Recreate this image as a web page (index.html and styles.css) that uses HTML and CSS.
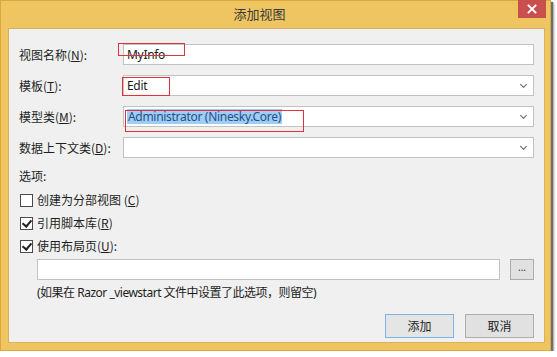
FILE: index.html
```html
<!DOCTYPE html>
<html lang="zh-CN">
<head>
<meta charset="utf-8">
<link rel="stylesheet" href="styles.css">
</head>
<body>
<div class="window">
  <div class="titlebar">
    <div class="title">添加视图</div>
    <div class="close">
      <svg width="10" height="10" viewBox="0 0 10 10"><path d="M1.5 1.5 L8.5 8.5 M8.5 1.5 L1.5 8.5" stroke="#fff" stroke-width="1.8" stroke-linecap="square"/></svg>
    </div>
  </div>
  <div class="panel">
    <div class="form">
      <label class="lbl">视图名称(<u>N</u>):</label>
      <div class="field"><span class="val">MyInfo</span><span class="mark m1"></span></div>

      <label class="lbl">模板(<u>T</u>):</label>
      <div class="field combo"><span class="val">Edit</span><span class="arrow"></span><span class="mark m2"></span></div>

      <label class="lbl">模型类(<u>M</u>):</label>
      <div class="field combo"><span class="val sel">Administrator (Ninesky.Core)</span><span class="arrow"></span><span class="mark m3"></span></div>

      <label class="lbl">数据上下文类(<u>D</u>):</label>
      <div class="field combo"><span class="arrow"></span></div>
    </div>

    <div class="section">选项:</div>
    <div class="check first"><span class="box"></span>创建为分部视图 (<u>C</u>)</div>
    <div class="check"><span class="box on"></span>引用脚本库(<u>R</u>)</div>
    <div class="check"><span class="box on"></span>使用布局页(<u>U</u>):</div>
    <div class="layout">
      <div class="field wide"></div>
      <div class="browse">...</div>
    </div>
    <div class="note">(如果在 Razor _viewstart 文件中设置了此选项，则留空)</div>
    <div class="buttons">
      <div class="btn default">添加</div>
      <div class="btn">取消</div>
    </div>
  </div>
</div>
</body>
</html>
```

FILE: styles.css
```css
html, body {
  margin: 0;
  padding: 0;
  background: #ffffff;
}
body {
  font-family: "Noto Sans", "Noto Sans CJK SC", sans-serif;
  font-size: 12px;
  color: #1e1e1e;
}
.window {
  width: 551px;
  box-sizing: border-box;
  background: #efc562;
  border: 1px solid #d9a83e;
  padding-bottom: 7px;
  box-shadow: 2px 2px 1px #6d6d6d, 3px 3px 2px rgba(0,0,0,0.35);
}
.titlebar {
  height: 27px;
  display: flex;
  align-items: flex-start;
}
.title {
  flex: 1;
  text-align: center;
  font-family: "Noto Sans CJK SC", sans-serif;
  font-size: 13px;
  color: #3a3a3a;
  line-height: 26px;
  height: 26px;
}
.close {
  width: 28px;
  height: 18px;
  background: #c94f4f;
  margin-right: 4px;
  display: flex;
  align-items: center;
  justify-content: center;
  margin-top: -1px;
}
.panel {
  height: 315px;
  margin: 0 5px 0 7px;
  background: #f0f0f0;
  border: 1px solid #d8b060;
  padding: 15px 10px 0 10px;
  box-sizing: border-box;
}
.form {
  display: grid;
  grid-template-columns: 104px 1fr;
  grid-auto-rows: 21px;
  row-gap: 10px;
  align-items: center;
}
.lbl {
  font-family: "Noto Sans CJK SC", sans-serif;
  font-size: 12px;
  line-height: 16px;
  height: 16px;
}
u { text-decoration: underline; text-underline-offset: 1px; }
.field {
  position: relative;
  height: 21px;
  background: #ffffff;
  border: 1px solid #c2c2c2;
  box-sizing: border-box;
  display: flex;
  align-items: center;
  padding-left: 3px;
}
.val {
  font-family: "Noto Sans", sans-serif;
  font-size: 12px;
  line-height: 15px;
  height: 15px;
  letter-spacing: -0.3px;
  color: #1a1a1a;
}
.val.sel {
  background: #9fcdf3;
  color: #1f4f8c;
  padding: 0 1px;
}
.combo .arrow {
  position: absolute;
  right: 7px;
  top: 6px;
  width: 4px;
  height: 4px;
  border-right: 1px solid #666;
  border-bottom: 1px solid #666;
  transform: rotate(45deg);
}
.mark {
  position: absolute;
  border: 1px solid #e0303a;
  box-sizing: border-box;
  pointer-events: none;
}
.m1 { left: -6px; top: -2px; width: 67px; height: 13px; }
.m2 { left: -2px; top: 1px; width: 48px; height: 19px; }
.m3 { left: 1px; top: 3px; width: 179px; height: 22px; }
.section {
  font-family: "Noto Sans CJK SC", sans-serif;
  margin-top: 10px;
  line-height: 16px;
  height: 16px;
}
.check {
  font-family: "Noto Sans CJK SC", sans-serif;
  display: flex;
  align-items: center;
  height: 16px;
  margin-top: 7px;
  line-height: 16px;
}
.check.first { margin-top: 8px; }
.box {
  width: 13px;
  height: 13px;
  flex: none;
  box-sizing: border-box;
  border: 1px solid #4a4a4a;
  background: #fff;
  margin-left: 1px;
  margin-right: 4px;
  position: relative;
}
.box.on::after {
  content: "";
  position: absolute;
  left: 3px;
  top: 0px;
  width: 4px;
  height: 7px;
  border-right: 2px solid #222;
  border-bottom: 2px solid #222;
  transform: rotate(40deg);
}
.layout {
  display: flex;
  margin-top: 5px;
  padding-left: 18px;
  gap: 10px;
  height: 21px;
}
.field.wide {
  flex: 1;
  height: 21px;
}
.browse {
  width: 24px;
  height: 21px;
  box-sizing: border-box;
  border: 1px solid #acacac;
  background: #e1e1e1;
  font-size: 10px;
  color: #333;
  text-align: center;
  line-height: 14px;
}
.note {
  font-family: "Noto Sans", "Noto Sans CJK SC", sans-serif;
  padding-left: 18px;
  margin-top: 5px;
  line-height: 16px;
  height: 16px;
  letter-spacing: -0.5px;
}
.buttons {
  display: flex;
  justify-content: flex-end;
  gap: 11px;
  margin-top: 13px;
}
.btn {
  width: 69px;
  height: 24px;
  box-sizing: border-box;
  border: 1px solid #adadad;
  background: #e1e1e1;
  font-family: "Noto Sans CJK SC", sans-serif;
  text-align: center;
  line-height: 22px;
  color: #222;
}
.btn.default {
  border: 1px solid #7eb4ea;
  background: #e5e5e5;
}
```
